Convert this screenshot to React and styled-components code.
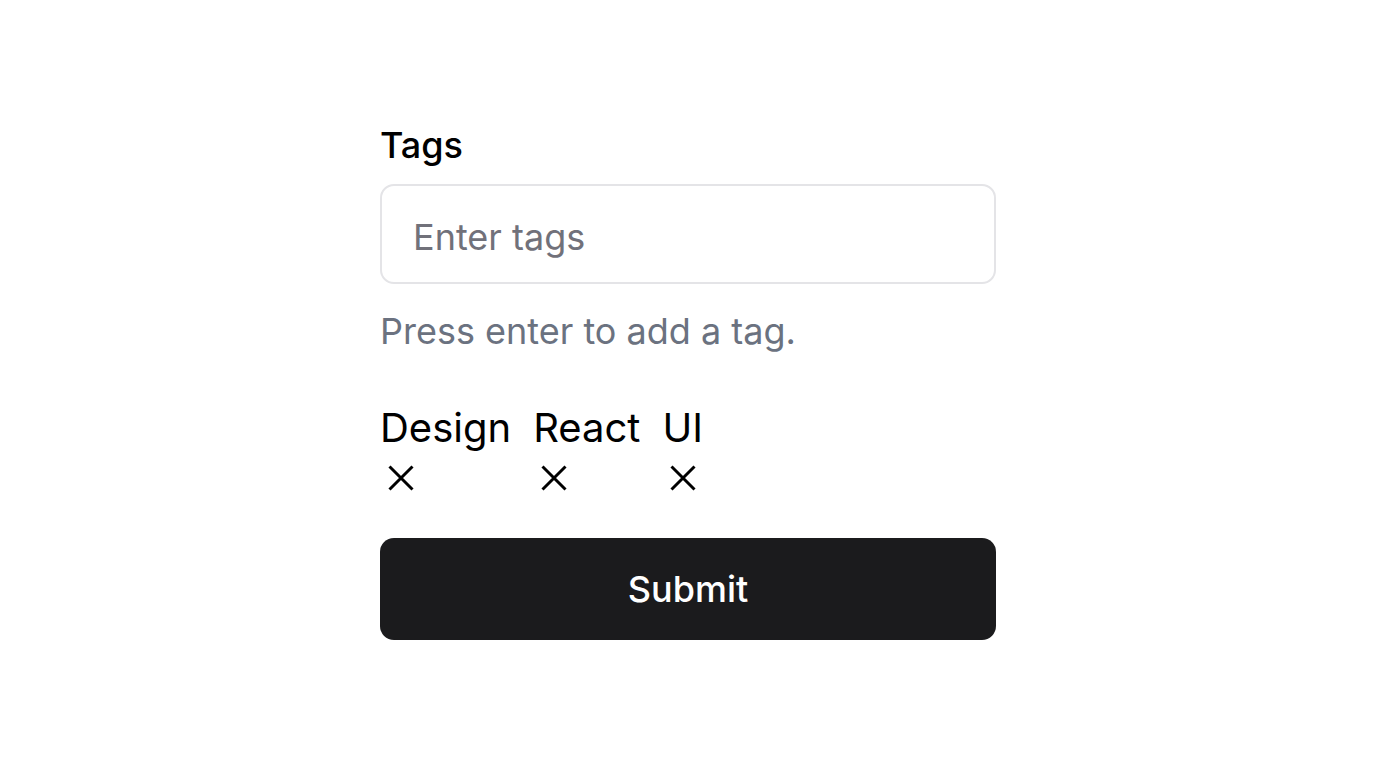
import React, { useState } from "react";
import styled, { createGlobalStyle } from "styled-components";

const GlobalStyle = createGlobalStyle`
  body {
    margin: 0;
    background: #ffffff;
    font-family: Inter, "Noto Sans", sans-serif;
    color: #0a0a0a;
  }
`;

const Page = styled.div`
  display: flex;
  justify-content: center;
  padding-top: 125px;
`;

const Form = styled.form`
  width: 616px;
  display: flex;
  flex-direction: column;
`;

const Label = styled.label`
  font-size: 36px;
  line-height: 40px;
  font-weight: 500;
  color: #000;
`;

const Input = styled.input`
  margin-top: 19px;
  box-sizing: border-box;
  height: 100px;
  width: 100%;
  padding: 5px 31px 0;
  border: 2px solid #e4e4e7;
  border-radius: 14px;
  font-family: inherit;
  font-size: 36px;
  color: #0a0a0a;
  outline: none;
  &::placeholder {
    color: #71717a;
  }
`;

const Helper = styled.p`
  margin: 25px 0 0;
  font-size: 36px;
  line-height: 44px;
  color: #6b7280;
`;

const TagList = styled.div`
  margin-top: 51px;
  display: flex;
  gap: 22px;
`;

const Tag = styled.span`
  display: flex;
  flex-direction: column;
  align-items: flex-start;
  font-size: 40px;
  line-height: 48px;
  color: #000;
`;

const Remove = styled.button`
  margin-top: 13px;
  padding: 0 0 0 8px;
  border: none;
  background: none;
  display: flex;
  cursor: pointer;
  color: #000;
`;

const Submit = styled.button`
  margin-top: 47px;
  height: 102px;
  border: none;
  border-radius: 14px;
  background: #1b1b1d;
  color: #fff;
  font-family: inherit;
  font-size: 36px;
  font-weight: 500;
  cursor: pointer;
`;

const CrossIcon = () => (
  <svg width="26" height="26" viewBox="0 0 26 26" fill="none">
    <path d="M1.5 1.5 L24.5 24.5 M24.5 1.5 L1.5 24.5" stroke="currentColor" strokeWidth="3" />
  </svg>
);

export default function App() {
  const [tags, setTags] = useState(["Design", "React", "UI"]);

  return (
    <>
      <GlobalStyle />
      <Page>
        <Form onSubmit={(e) => e.preventDefault()}>
          <Label htmlFor="tags">Tags</Label>
          <Input id="tags" placeholder="Enter tags" />
          <Helper>Press enter to add a tag.</Helper>
          <TagList>
            {tags.map((t) => (
              <Tag key={t}>
                {t}
                <Remove type="button" onClick={() => setTags(tags.filter((x) => x !== t))}>
                  <CrossIcon />
                </Remove>
              </Tag>
            ))}
          </TagList>
          <Submit type="submit">Submit</Submit>
        </Form>
      </Page>
    </>
  );
}
